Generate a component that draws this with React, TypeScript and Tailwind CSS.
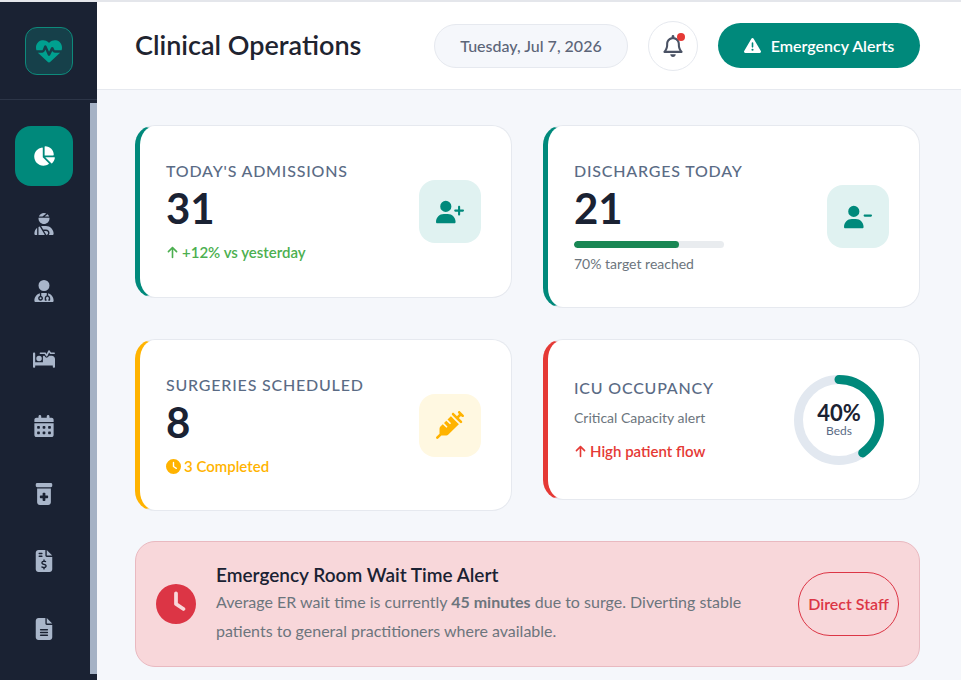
import {
  FaArrowUp,
  FaBedPulse,
  FaCalendarDays,
  FaChartPie,
  FaClock,
  FaFileInvoiceDollar,
  FaFileLines,
  FaHeartPulse,
  FaPrescriptionBottleMedical,
  FaRegBell,
  FaSyringe,
  FaTriangleExclamation,
  FaUserDoctor,
  FaUserInjured,
  FaUserMinus,
  FaUserPlus,
} from "react-icons/fa6";

const navItems = [
  { icon: FaChartPie, active: true },
  { icon: FaUserInjured },
  { icon: FaUserDoctor },
  { icon: FaBedPulse },
  { icon: FaCalendarDays },
  { icon: FaPrescriptionBottleMedical },
  { icon: FaFileInvoiceDollar },
  { icon: FaFileLines },
];

function Sidebar() {
  return (
    <aside className="flex h-full w-[97px] shrink-0 flex-col bg-[#1a2233]">
      <div className="flex h-[98px] shrink-0 items-center justify-center border-b border-[#2c3547]">
        <div className="flex h-[48px] w-[48px] items-center justify-center rounded-xl border border-[#0e8a7b] bg-[#16404a] text-[#00a08f]">
          <FaHeartPulse size={26} />
        </div>
      </div>
      <div className="flex min-h-0 flex-1">
        <nav className="flex w-[90px] flex-col gap-[7.5px] pt-[26px] pl-[15px]">
          {navItems.map(({ icon: Icon, active }, i) => (
            <div
              key={i}
              className={
                active
                  ? "flex h-[60px] w-[58px] shrink-0 items-center justify-center rounded-2xl bg-[#00897b] text-white"
                  : "flex h-[60px] w-[58px] shrink-0 items-center justify-center text-[#a9b6ca]"
              }
            >
              <Icon size={22} />
            </div>
          ))}
        </nav>
        <div className="mb-[6px] mt-[3px] w-[7px] bg-[#a5b2c5]" />
      </div>
    </aside>
  );
}

function Header() {
  return (
    <header className="flex h-[88px] shrink-0 items-center justify-between border-b border-[#e6e9ef] bg-white pl-[38px] pr-[41px]">
      <h1 className="text-[27px] font-semibold text-[#1f2430]">Clinical Operations</h1>
      <div className="flex items-center gap-5">
        <div className="flex h-[44px] w-[194px] items-center justify-center rounded-full border border-[#e6e9ef] bg-[#f5f7fb] text-[16px] font-medium text-[#5c6578]">
          Tuesday, Jul 7, 2026
        </div>
        <div className="relative flex h-[50px] w-[50px] items-center justify-center rounded-full border border-[#e6e9ef] bg-white text-[#4a5264]">
          <FaRegBell size={22} />
          <span className="absolute right-[12px] top-[11px] h-[8px] w-[8px] rounded-full bg-[#e53935]" />
        </div>
        <button
          type="button"
          className="flex h-[45px] w-[202px] items-center justify-center gap-[10px] rounded-full bg-[#00897b] text-[16px] font-semibold text-white"
        >
          <FaTriangleExclamation size={17} />
          Emergency Alerts
        </button>
      </div>
    </header>
  );
}

function CardTitle({ children }: { children: React.ReactNode }) {
  return <p className="text-[16px] font-medium leading-[24px] tracking-[0.05em] text-[#5a6b85]">{children}</p>;
}

function CardValue({ children }: { children: React.ReactNode }) {
  return <p className="text-[42px] font-bold leading-[50px] text-[#1a2233]">{children}</p>;
}

function IconBox({ className, children }: { className: string; children: React.ReactNode }) {
  return <div className={`flex h-[63px] w-[62px] items-center justify-center rounded-2xl ${className}`}>{children}</div>;
}

function OccupancyRing() {
  return (
    <div className="relative h-[90px] w-[90px]">
      <svg viewBox="0 0 90 90" className="h-[90px] w-[90px]">
        <circle cx="45" cy="45" r="40.5" fill="none" stroke="#e2e8f0" strokeWidth="9" />
        <circle
          cx="45"
          cy="45"
          r="40.5"
          fill="none"
          stroke="#00897b"
          strokeWidth="9"
          strokeLinecap="round"
          strokeDasharray="101.8 254.5"
          transform="rotate(-90 45 45)"
        />
      </svg>
      <div className="absolute inset-0 flex flex-col items-center justify-center">
        <span className="text-[22px] font-bold leading-[22px] text-[#1a2233]">40%</span>
        <span className="text-[12px] leading-[14px] text-[#5a6b85]">Beds</span>
      </div>
    </div>
  );
}

export default function App() {
  return (
    <div className="flex h-screen flex-col overflow-hidden bg-[#f5f7fb] font-['Lato',sans-serif]">
      <div className="h-[2px] shrink-0 bg-[#e4e6eb]" />
      <div className="flex min-h-0 flex-1">
        <Sidebar />
        <div className="flex min-w-0 flex-1 flex-col">
          <Header />
          <main className="flex flex-col gap-[30px] pl-[38px] pr-[41px] pt-[35px]">
            <div className="grid grid-cols-2 items-start gap-[31px]">
              <div className="flex h-[173px] items-center justify-between rounded-[20px] border border-l-[5px] border-[#e6e9ef] border-l-[#00897b] bg-white pl-[26px] pr-[30px]">
                <div>
                  <CardTitle>TODAY'S ADMISSIONS</CardTitle>
                  <CardValue>31</CardValue>
                  <p className="mt-[8px] flex items-center gap-[3px] text-[15px] font-semibold text-[#4caf50]">
                    <FaArrowUp size={13} />
                    +12% vs yesterday
                  </p>
                </div>
                <IconBox className="bg-[#e0f2f1] text-[#00897b]">
                  <FaUserPlus size={28} />
                </IconBox>
              </div>

              <div className="flex h-[183px] items-center justify-between rounded-[20px] border border-l-[5px] border-[#e6e9ef] border-l-[#00897b] bg-white pl-[26px] pr-[30px]">
                <div>
                  <CardTitle>DISCHARGES TODAY</CardTitle>
                  <CardValue>21</CardValue>
                  <div className="mt-[8px] h-[7px] w-[150px] overflow-hidden rounded-full bg-[#e9ecef]">
                    <div className="h-full rounded-full bg-[#198754]" style={{ width: "70%" }} />
                  </div>
                  <p className="mt-[5px] text-[14px] text-[#6c757d]">70% target reached</p>
                </div>
                <IconBox className="bg-[#e0f2f1] text-[#00897b]">
                  <FaUserMinus size={28} />
                </IconBox>
              </div>

              <div className="flex h-[172px] items-center justify-between rounded-[20px] border border-l-[5px] border-[#e6e9ef] border-l-[#ffb300] bg-white pl-[26px] pr-[30px]">
                <div>
                  <CardTitle>SURGERIES SCHEDULED</CardTitle>
                  <CardValue>8</CardValue>
                  <p className="mt-[8px] flex items-center gap-[3px] text-[15px] font-semibold text-[#ffb300]">
                    <FaClock size={15} />
                    3 Completed
                  </p>
                </div>
                <IconBox className="bg-[#fff8e1] text-[#ffb300]">
                  <FaSyringe size={28} />
                </IconBox>
              </div>

              <div className="flex h-[161px] items-center justify-between rounded-[20px] border border-l-[5px] border-[#e6e9ef] border-l-[#e53935] bg-white pl-[26px] pr-[35px]">
                <div>
                  <CardTitle>ICU OCCUPANCY</CardTitle>
                  <p className="mt-[7px] text-[14px] text-[#6c757d]">Critical Capacity alert</p>
                  <p className="mt-[12px] flex items-center gap-[3px] text-[15px] font-semibold text-[#e53935]">
                    <FaArrowUp size={13} />
                    High patient flow
                  </p>
                </div>
                <OccupancyRing />
              </div>
            </div>

            <div className="flex h-[126px] items-center gap-[20px] rounded-[20px] border border-[#e9b9c0] bg-[#f8d7da] pl-[20px] pr-[20px]">
              <div className="flex h-[40px] w-[40px] shrink-0 items-center justify-center rounded-full text-[#dc3545]">
                <FaClock size={40} />
              </div>
              <div className="min-w-0 flex-1">
                <h2 className="text-[19px] font-semibold leading-[24px] text-[#1a2233]">Emergency Room Wait Time Alert</h2>
                <p className="text-[16px] leading-[29px] text-[#6c757d]">
                  Average ER wait time is currently <strong className="font-bold">45 minutes</strong> due to surge. Diverting stable patients to general practitioners where available.
                </p>
              </div>
              <button
                type="button"
                className="h-[64px] w-[101px] shrink-0 rounded-full border border-[#dc3545] text-[16px] font-semibold leading-[26px] text-[#dc3545]"
              >
                Direct Staff
              </button>
            </div>
          </main>
        </div>
      </div>
    </div>
  );
}
